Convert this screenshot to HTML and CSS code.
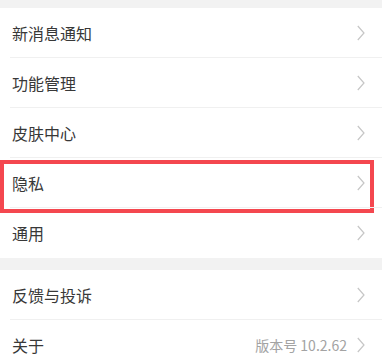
FILE: index.html
```html
<!DOCTYPE html>
<html lang="zh">
<head>
<meta charset="utf-8">
<link rel="stylesheet" href="styles.css">
</head>
<body>
<div class="page">
  <div class="band band-top"></div>
  <div class="group">
    <div class="row"><span class="label">新消息通知</span><svg class="chev" viewBox="0 0 8 16"><path d="M0.8 1 L7 8 L0.8 15"/></svg></div>
    <div class="row"><span class="label">功能管理</span><svg class="chev" viewBox="0 0 8 16"><path d="M0.8 1 L7 8 L0.8 15"/></svg></div>
    <div class="row"><span class="label">皮肤中心</span><svg class="chev" viewBox="0 0 8 16"><path d="M0.8 1 L7 8 L0.8 15"/></svg></div>
    <div class="row row-marked"><span class="label">隐私</span><svg class="chev" viewBox="0 0 8 16"><path d="M0.8 1 L7 8 L0.8 15"/></svg><div class="highlight"></div></div>
    <div class="row last"><span class="label">通用</span><svg class="chev" viewBox="0 0 8 16"><path d="M0.8 1 L7 8 L0.8 15"/></svg></div>
  </div>
  <div class="band band-mid"></div>
  <div class="group">
    <div class="row"><span class="label">反馈与投诉</span><svg class="chev" viewBox="0 0 8 16"><path d="M0.8 1 L7 8 L0.8 15"/></svg></div>
    <div class="row last"><span class="label">关于</span><span class="value">版本号 10.2.62</span><svg class="chev" viewBox="0 0 8 16"><path d="M0.8 1 L7 8 L0.8 15"/></svg></div>
  </div>
</div>
</body>
</html>
```

FILE: styles.css
```css
html, body {
  margin: 0;
  padding: 0;
  background: #ffffff;
}
.page {
  width: 382px;
  font-family: "Noto Sans CJK SC", "Noto Sans", sans-serif;
}
.band {
  background: #f2f2f2;
}
.band-top { height: 8px; }
.band-mid { height: 12px; }
.group {
  display: flex;
  flex-direction: column;
}
.row {
  position: relative;
  height: 50px;
  display: flex;
  align-items: center;
  padding: 0 17px 0 12px;
  box-sizing: border-box;
}
.row::after {
  content: "";
  position: absolute;
  left: 10px;
  right: 0;
  bottom: 0;
  height: 1px;
  background: #f0f0f0;
}
.row.last::after { display: none; }
.label {
  flex: 1;
  font-size: 16px;
  color: #383838;
  line-height: 20px;
}
.value {
  font-size: 14px;
  color: #a3a3a3;
  margin-right: 10px;
  line-height: 20px;
}
.chev {
  width: 8px;
  height: 16px;
  fill: none;
  stroke: #c6c6c6;
  stroke-width: 1.2;
}
.highlight {
  position: absolute;
  left: 0;
  top: 2px;
  width: 374px;
  height: 53px;
  box-sizing: border-box;
  border: 4px solid #f4474f;
  pointer-events: none;
}
```
